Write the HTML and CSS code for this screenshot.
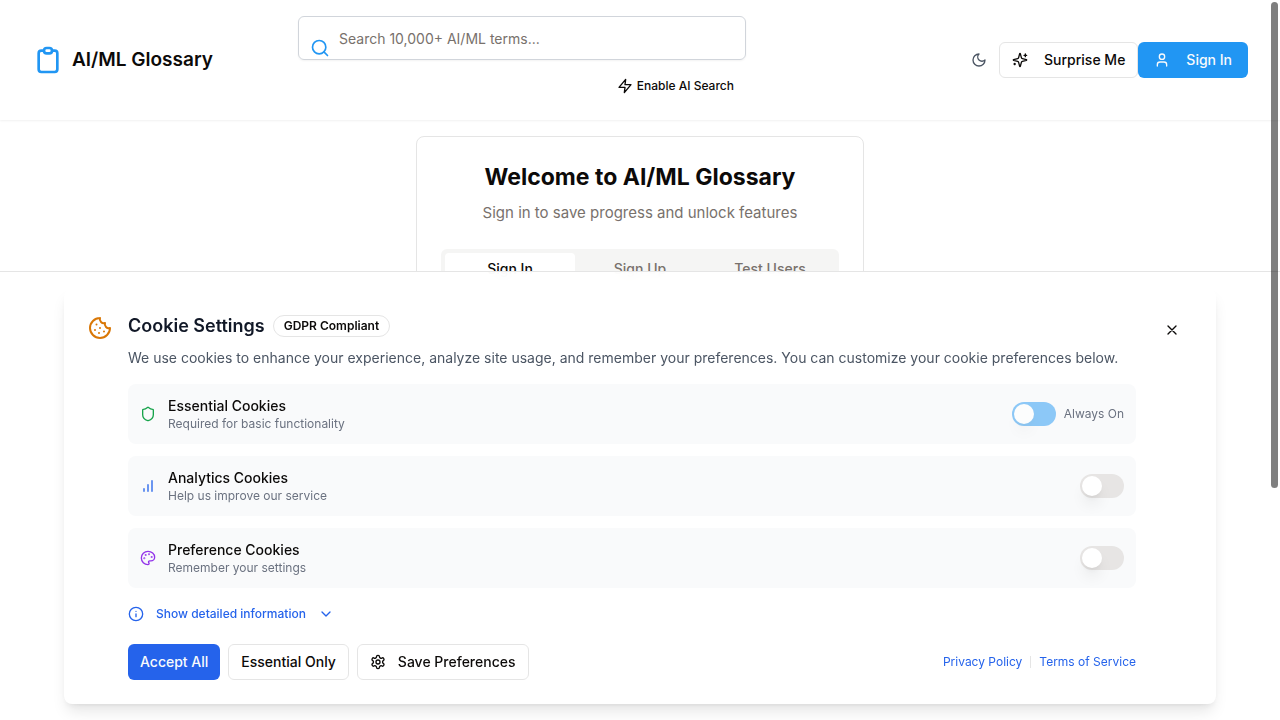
FILE: index.html
```html
<!DOCTYPE html>
<html lang="en">
<head>
<meta charset="utf-8">
<meta name="viewport" content="width=device-width, initial-scale=1">
<title>AI/ML Glossary</title>
<link rel="stylesheet" href="styles.css">
</head>
<body>
<header class="site-header">
  <a class="brand" href="#">
    <svg class="icon icon-xl" viewBox="0 0 24 24" aria-hidden="true"><path d="M9 5H7a2 2 0 00-2 2v12a2 2 0 002 2h10a2 2 0 002-2V7a2 2 0 00-2-2h-2M9 5a2 2 0 002 2h2a2 2 0 002-2M9 5a2 2 0 012-2h2a2 2 0 012 2"/></svg>
    <span>AI/ML Glossary</span>
  </a>
  <form class="search" role="search">
    <div class="search-field">
      <svg class="icon icon-md search-icon" viewBox="0 0 24 24" aria-hidden="true"><circle cx="11" cy="11" r="8"/><path d="m21 21-4.3-4.3"/></svg>
      <input class="search-input" type="search" placeholder="Search 10,000+ AI/ML terms..." aria-label="Search terms">
    </div>
    <button class="ai-toggle" type="button">
      <svg class="icon icon-sm" viewBox="0 0 24 24" aria-hidden="true"><path d="M13 2 3 14h9l-1 8 10-12h-9z"/></svg>
      Enable AI Search
    </button>
  </form>
  <nav class="actions" aria-label="Account">
    <button class="icon-button theme-button" type="button" aria-label="Toggle theme">
      <svg class="icon icon-sm" viewBox="0 0 24 24" aria-hidden="true"><path d="M12 3a6 6 0 0 0 9 9 9 9 0 1 1-9-9Z"/></svg>
    </button>
    <button class="button button-outline button-spaced" type="button">
      <svg class="icon icon-sm" viewBox="0 0 24 24" aria-hidden="true"><path d="M9.937 15.5A2 2 0 0 0 8.5 14.063l-6.135-1.582a.5.5 0 0 1 0-.962L8.5 9.936A2 2 0 0 0 9.937 8.5l1.582-6.135a.5.5 0 0 1 .963 0L14.063 8.5A2 2 0 0 0 15.5 9.937l6.135 1.581a.5.5 0 0 1 0 .964L15.5 14.063a2 2 0 0 0-1.437 1.437l-1.582 6.135a.5.5 0 0 1-.963 0z"/><path d="M20 3v4M22 5h-4M4 17v2M5 18H3"/></svg>
      Surprise Me
    </button>
    <button class="button button-primary button-spaced" type="button">
      <svg class="icon icon-sm" viewBox="0 0 24 24" aria-hidden="true"><path d="M19 21v-2a4 4 0 0 0-4-4H9a4 4 0 0 0-4 4v2"/><circle cx="12" cy="7" r="4"/></svg>
      Sign In
    </button>
  </nav>
</header>

<main class="page">
  <section class="auth-card">
    <h1 class="auth-title">Welcome to AI/ML Glossary</h1>
    <p class="auth-subtitle">Sign in to save progress and unlock features</p>
    <div class="tabs" role="tablist">
      <button class="tab tab-active" type="button" role="tab" aria-selected="true">Sign In</button>
      <button class="tab" type="button" role="tab" aria-selected="false">Sign Up</button>
      <button class="tab" type="button" role="tab" aria-selected="false">Test Users</button>
    </div>
  </section>
</main>

<aside class="cookie-banner" aria-labelledby="cookie-title">
  <div class="cookie-card">
    <svg class="icon icon-lg cookie-icon" viewBox="0 0 24 24" aria-hidden="true"><path d="M12 2a10 10 0 1 0 10 10 4 4 0 0 1-5-5 4 4 0 0 1-5-5"/><path d="M8.5 8.5v.01M16 15.5v.01M12 12v.01M11 17v.01M7 14v.01"/></svg>
    <div class="cookie-body">
      <div class="cookie-heading">
        <h2 class="cookie-title" id="cookie-title">Cookie Settings</h2>
        <span class="badge">GDPR Compliant</span>
      </div>
      <p class="cookie-text">We use cookies to enhance your experience, analyze site usage, and remember your preferences. You can customize your cookie preferences below.</p>
      <div class="options">
        <div class="option">
          <svg class="icon icon-sm option-green" viewBox="0 0 24 24" aria-hidden="true"><path d="M20 13c0 5-3.500 7.500-7.660 8.950a1 1 0 0 1-.67-.01C7.500 20.500 4 18 4 13V6a1 1 0 0 1 1-1c2 0 4.500-1.200 6.240-2.720a1.170 1.170 0 0 1 1.520 0C14.510 3.810 17 5 19 5a1 1 0 0 1 1 1z"/></svg>
          <div class="option-text">
            <label class="option-label" for="essential">Essential Cookies</label>
            <p class="option-note">Required for basic functionality</p>
          </div>
          <input class="switch switch-locked" type="checkbox" role="switch" id="essential" checked disabled>
          <span class="option-status">Always On</span>
        </div>
        <div class="option">
          <svg class="icon icon-sm option-blue" viewBox="0 0 24 24" aria-hidden="true"><path d="M12 20V10M18 20V4M6 20v-4"/></svg>
          <div class="option-text">
            <label class="option-label" for="analytics">Analytics Cookies</label>
            <p class="option-note">Help us improve our service</p>
          </div>
          <input class="switch" type="checkbox" role="switch" id="analytics">
        </div>
        <div class="option">
          <svg class="icon icon-sm option-purple" viewBox="0 0 24 24" aria-hidden="true"><circle cx="13.5" cy="6.500" r=".5"/><circle cx="17.5" cy="10.5" r=".5"/><circle cx="8.5" cy="7.500" r=".5"/><circle cx="6.500" cy="12.5" r=".5"/><path d="M12 2C6.500 2 2 6.500 2 12s4.500 10 10 10c.926 0 1.648-.746 1.648-1.688 0-.437-.18-.835-.437-1.125-.29-.289-.438-.652-.438-1.125a1.640 1.640 0 0 1 1.668-1.668h1.996c3.051 0 5.555-2.503 5.555-5.554C21.965 6.012 17.461 2 12 2z"/></svg>
          <div class="option-text">
            <label class="option-label" for="preference">Preference Cookies</label>
            <p class="option-note">Remember your settings</p>
          </div>
          <input class="switch" type="checkbox" role="switch" id="preference">
        </div>
      </div>
      <button class="details-button" type="button">
        <svg class="icon icon-sm" viewBox="0 0 24 24" aria-hidden="true"><circle cx="12" cy="12" r="10"/><path d="M12 16v-4M12 8h.01"/></svg>
        <span>Show detailed information</span>
        <svg class="icon icon-sm" viewBox="0 0 24 24" aria-hidden="true"><path d="m6 9 6 6 6-6"/></svg>
      </button>
      <div class="cookie-footer">
        <div class="cookie-actions">
          <button class="button button-accept" type="button">Accept All</button>
          <button class="button button-outline" type="button">Essential Only</button>
          <button class="button button-outline" type="button">
            <svg class="icon icon-sm" viewBox="0 0 24 24" aria-hidden="true"><path d="M12.220 2h-.44a2 2 0 0 0-2 2v.18a2 2 0 0 1-1 1.730l-.43.25a2 2 0 0 1-2 0l-.15-.08a2 2 0 0 0-2.730.73l-.22.38a2 2 0 0 0 .73 2.730l.15.1a2 2 0 0 1 1 1.720v.51a2 2 0 0 1-1 1.740l-.15.09a2 2 0 0 0-.73 2.730l.22.38a2 2 0 0 0 2.730.73l.15-.08a2 2 0 0 1 2 0l.43.25a2 2 0 0 1 1 1.730V20a2 2 0 0 0 2 2h.44a2 2 0 0 0 2-2v-.18a2 2 0 0 1 1-1.730l.43-.25a2 2 0 0 1 2 0l.15.08a2 2 0 0 0 2.730-.73l.22-.39a2 2 0 0 0-.73-2.730l-.15-.08a2 2 0 0 1-1-1.740v-.5a2 2 0 0 1 1-1.740l.15-.09a2 2 0 0 0 .73-2.730l-.22-.38a2 2 0 0 0-2.730-.73l-.15.08a2 2 0 0 1-2 0l-.43-.25a2 2 0 0 1-1-1.730V4a2 2 0 0 0-2-2z"/><circle cx="12" cy="12" r="3"/></svg>
            Save Preferences
          </button>
        </div>
        <div class="legal">
          <a class="legal-link" href="#">Privacy Policy</a>
          <span class="legal-divider"></span>
          <a class="legal-link" href="#">Terms of Service</a>
        </div>
      </div>
    </div>
    <button class="icon-button" type="button" aria-label="Close">
      <svg class="icon icon-sm" viewBox="0 0 24 24" aria-hidden="true"><path d="M18 6 6 18M6 6l12 12"/></svg>
    </button>
  </div>
</aside>
<div class="scroll-thumb" aria-hidden="true"></div>
</body>
</html>
```
FILE: styles.css
```css
* { box-sizing: border-box; }

body {
  margin: 0;
  height: 100vh;
  overflow: hidden;
  background: #fff;
  color: #0c0a09;
  font-family: Inter, "Liberation Sans", sans-serif;
  font-size: 14px;
  line-height: 20px;
}

h1, h2, p { margin: 0; }
button, input { font: inherit; color: inherit; margin: 0; }
button { cursor: pointer; }
a { text-decoration: none; }

.icon {
  flex: none;
  display: block;
  fill: none;
  stroke: currentColor;
  stroke-width: 2;
  stroke-linecap: round;
  stroke-linejoin: round;
}
.icon-sm { width: 16px; height: 16px; }
.icon-md { width: 20px; height: 20px; }
.icon-lg { width: 24px; height: 24px; }
.icon-xl { width: 32px; height: 32px; color: #2196f3; }

.site-header {
  display: grid;
  grid-template-columns: 266px minmax(0, 448px) 1fr;
  align-items: center;
  padding: 16px 32px;
  box-shadow: 0 1px 2px rgba(0, 0, 0, 0.06);
}

.brand {
  display: flex;
  align-items: center;
  gap: 8px;
  color: inherit;
  font-size: 19px;
  font-weight: 600;
  line-height: 28px;
}

.search {
  display: flex;
  flex-direction: column;
  align-items: flex-end;
  gap: 8px;
}
.search-field { position: relative; width: 100%; }
.search-icon {
  position: absolute;
  left: 12px;
  top: 22px;
  color: #2196f3;
}
.search-input {
  display: block;
  width: 100%;
  height: 44px;
  padding: 0 16px 0 40px;
  border: 1px solid #d1d5db;
  border-radius: 6px;
  background: transparent;
  box-shadow: 0 1px 2px rgba(0, 0, 0, 0.05);
}
.search-input::placeholder { color: #78716c; opacity: 1; }

.ai-toggle {
  display: flex;
  align-items: center;
  gap: 4px;
  height: 36px;
  padding: 0 12px;
  border: 0;
  background: none;
  font-size: 12px;
  font-weight: 500;
}

.actions {
  display: flex;
  align-items: center;
  justify-content: flex-end;
}

.icon-button {
  flex: none;
  display: flex;
  align-items: center;
  justify-content: center;
  width: 40px;
  height: 36px;
  padding: 0;
  border: 0;
  background: none;
}
.theme-button { color: #4b5563; }

.button {
  display: flex;
  align-items: center;
  gap: 12px;
  height: 36px;
  padding: 0 12px;
  border: 0;
  border-radius: 6px;
  font-weight: 500;
  white-space: nowrap;
}
.button-outline { border: 1px solid #e5e5e5; background: #fff; }
.button-spaced { gap: 16px; }
.button-primary { padding: 0 16px; background: #2196f3; color: #f8fafc; }
.button-accept { background: #2563eb; color: #f8fafc; }

.page { padding: 16px; }

.auth-card {
  max-width: 448px;
  height: 480px;
  margin: 0 auto;
  padding: 24px;
  border: 1px solid #e5e5e5;
  border-radius: 8px;
  text-align: center;
}
.auth-title { font-size: 23px; font-weight: 700; line-height: 32px; }
.auth-subtitle {
  margin-top: 8px;
  color: #78716c;
  font-size: 15px;
  line-height: 24px;
}

.tabs {
  display: grid;
  grid-template-columns: repeat(3, 1fr);
  margin-top: 24px;
  padding: 4px;
  border-radius: 6px;
  background: #f5f5f4;
}
.tab {
  height: 32px;
  padding: 0;
  border: 0;
  border-radius: 4px;
  background: none;
  color: #78716c;
  font-weight: 500;
}
.tab-active { background: #fff; color: #0c0a09; }

.cookie-banner {
  position: fixed;
  right: 0;
  bottom: 0;
  left: 0;
  padding: 16px;
  border-top: 1px solid #e5e5e5;
  background: rgba(255, 255, 255, 0.95);
  backdrop-filter: blur(8px);
}
.cookie-card {
  display: flex;
  align-items: flex-start;
  gap: 16px;
  max-width: 1152px;
  margin: 0 auto;
  padding: 24px;
  border-radius: 8px;
  background: #fff;
  box-shadow: 0 10px 15px -3px rgba(0, 0, 0, 0.1), 0 4px 6px -4px rgba(0, 0, 0, 0.1);
}
.cookie-icon { margin-top: 4px; color: #d97706; }
.cookie-body { flex: 1; min-width: 0; }

.cookie-heading { display: flex; align-items: center; gap: 8px; }
.cookie-title {
  color: #111827;
  font-size: 18px;
  font-weight: 600;
  line-height: 28px;
}
.badge {
  padding: 2px 10px;
  border: 1px solid #e5e5e5;
  border-radius: 12px;
  font-size: 12px;
  font-weight: 600;
  line-height: 16px;
}
.cookie-text { margin-top: 8px; color: #4b5563; }

.options {
  display: flex;
  flex-direction: column;
  gap: 12px;
  margin-top: 16px;
}
.option {
  display: flex;
  align-items: center;
  padding: 12px;
  border-radius: 8px;
  background: #f9fafb;
}
.option-green { color: #16a34a; }
.option-blue { color: #2563eb; }
.option-purple { color: #9333ea; }
.option-text { flex: 1; margin-left: 12px; }
.option-label { display: block; font-weight: 500; }
.option-note, .option-status {
  color: #6b7280;
  font-size: 12px;
  line-height: 16px;
}
.option-status { margin-left: 8px; }

.switch {
  appearance: none;
  flex: none;
  width: 44px;
  height: 24px;
  padding: 2px;
  border-radius: 12px;
  background: #e7e5e4;
}
.switch::before {
  content: "";
  display: block;
  width: 20px;
  height: 20px;
  border-radius: 50%;
  background: #fff;
  box-shadow: 0 10px 15px -3px rgba(0, 0, 0, 0.1), 0 4px 6px -4px rgba(0, 0, 0, 0.1);
}
.switch-locked { background: #2196f3; opacity: 0.5; }

.details-button {
  display: flex;
  align-items: center;
  gap: 12px;
  margin-top: 16px;
  padding: 0;
  border: 0;
  background: none;
  color: #2563eb;
  font-size: 12px;
  font-weight: 500;
  line-height: 20px;
}

.cookie-footer {
  display: flex;
  align-items: center;
  justify-content: space-between;
  margin-top: 20px;
}
.cookie-actions { display: flex; gap: 8px; }
.legal { display: flex; align-items: center; gap: 8px; font-size: 12px; line-height: 16px; }
.legal-link { color: #2563eb; }
.legal-divider { width: 1px; height: 12px; background: #e5e5e5; }

.scroll-thumb {
  position: fixed;
  top: 2px;
  right: 2px;
  width: 7px;
  height: 486px;
  border-radius: 4px;
  background: rgba(0, 0, 0, 0.5);
}
```
